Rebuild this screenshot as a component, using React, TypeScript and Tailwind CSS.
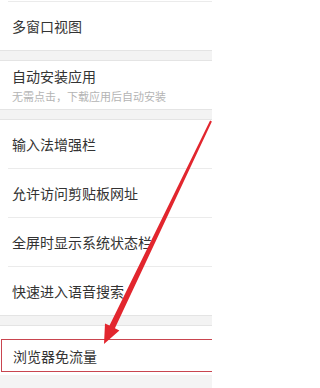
const font = { fontFamily: '"Noto Sans CJK SC", "Noto Sans", sans-serif' };

function Row({ title, sub, divider = true }: { title: string; sub?: string; divider?: boolean }) {
  return (
    <div className="bg-white">
      <div className="h-12 flex flex-col justify-center pl-3">
        <div className="text-[14px] leading-[18px] text-[#333333]">{title}</div>
        {sub && <div className="text-[11px] leading-[14px] text-[#b4b4b4] mt-[4px]">{sub}</div>}
      </div>
      {divider && <div className="ml-2 h-px bg-[#ebebeb]" />}
    </div>
  );
}

function Gap() {
  return <div className="h-[11px] bg-[#f3f3f3] border-y border-[#e4e4e4]" />;
}

export default function App() {
  return (
    <div className="relative w-[212px] h-[388px] overflow-hidden bg-[#f4f4f4]" style={font}>
      <div className="bg-white pt-px">
        <div className="ml-2 h-px bg-[#ebebeb]" />
      </div>
      <Row title="多窗口视图" divider={false} />
      <Gap />
      <Row title="自动安装应用" sub="无需点击，下载应用后自动安装" divider={false} />
      <Gap />
      <Row title="输入法增强栏" />
      <Row title="允许访问剪贴板网址" />
      <Row title="全屏时显示系统状态栏" />
      <Row title="快速进入语音搜索" divider={false} />
      <Gap />
      <div className="bg-white h-[49px] pt-[13px]">
        <div className="ml-px -mr-2 h-[33px] border border-[#c9454f] flex items-center pl-[11px]">
          <span className="text-[14px] leading-[18px] text-[#333333]">浏览器免流量</span>
        </div>
      </div>

      {/* red annotation arrow */}
      <svg className="absolute inset-0 pointer-events-none" width="212" height="388" viewBox="0 0 212 388">
        <polygon
          points="211.9,121.4 210.1,120.6 109.5,325.6 105,323.4 104,344 119.4,330.4 114.9,328.2"
          fill="#e2262e"
        />
      </svg>
    </div>
  );
}
